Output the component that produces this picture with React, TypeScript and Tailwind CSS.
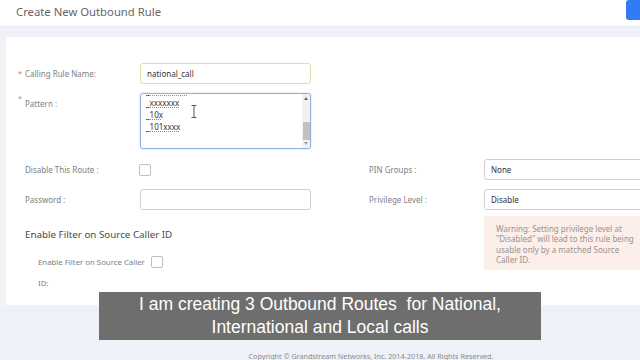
import React from 'react';

const font = { fontFamily: '"Noto Sans", "Open Sans", sans-serif' };

const Label: React.FC<{ text: string; required?: boolean; className?: string }> = ({ text, required, className }) => (
  <div className={`relative pl-[19px] text-[8px] text-[#808080] ${className || ''}`}>
    {required && <span className="absolute left-[12px] top-[1px] text-[7px] text-[#e26a6a]">*</span>}
    {text}
  </div>
);

const Input: React.FC<{ value?: string; className?: string }> = ({ value, className }) => (
  <div
    className={`flex h-[21px] items-center rounded-[3px] border border-[#cfcfcf] bg-white px-[6px] text-[8px] text-[#333] ${className || ''}`}
  >
    {value}
  </div>
);

const patterns = ['_xxxxxxxxx', '_xxxxxxx', '_10x', '_101xxxx'];

export default function App() {
  return (
    <div className="relative h-[360px] w-[640px] overflow-hidden bg-[#eef2f8]" style={font}>
      {/* Header */}
      <div className="flex h-[26px] items-start justify-between bg-white">
        <div className="pl-[16px] pt-[4px] text-[11.3px] text-[#666]">Create New Outbound Rule</div>
        <div className="h-[20px] w-[14px] rounded-l-[3px] bg-[#2f7cf6]" />
      </div>
      <div className="h-[11px] border-t border-[#e6e9ee] bg-[#eef1f5]" />

      <div className="flex h-[268px]">
        <div className="w-[6px] shrink-0 bg-[#f1f3f6]" />
        <div className="flex-1 bg-white pt-[26px]">
          {/* Calling Rule Name */}
          <div className="flex items-center">
            <Label text="Calling Rule Name:" required className="w-[134px]" />
            <Input value="national_call" className="w-[171px] border-[#e3dca6] bg-[#fcf4bf]" />
          </div>

          {/* Pattern */}
          <div className="mt-[9px] flex items-start">
            <Label text="Pattern :" required className="w-[134px] pt-[5px]" />
            <div className="relative flex h-[56px] w-[171px] overflow-hidden rounded-[3px] border border-[#8fb1dc] bg-white shadow-[0_0_2px_#b9d0ee]">
              <div className="mt-[-9px] flex-1 pl-[5px] text-[8px] leading-[12px] text-[#333]">
                {patterns.map((p) => (
                  <div key={p} className="underline decoration-[#e06a6a] decoration-dotted underline-offset-1">
                    {p}
                  </div>
                ))}
              </div>
              <div className="flex w-[8px] flex-col items-center bg-[#f1f1f1]">
                <div className="mt-[3px] h-0 w-0 border-x-[2px] border-b-[3px] border-x-transparent border-b-[#666]" />
                <div className="mt-[22px] h-[18px] w-[7px] bg-[#c1c1c1]" />
                <div className="mt-auto mb-[3px] h-0 w-0 border-x-[2px] border-t-[3px] border-x-transparent border-t-[#999]" />
              </div>
              {/* text cursor */}
              <svg className="absolute left-[50px] top-[11px]" width="6" height="13" viewBox="0 0 6 13">
                <path d="M0.5 0.5h5M3 0.5v12M0.5 12.5h5" stroke="#555" strokeWidth="1" fill="none" />
              </svg>
            </div>
          </div>

          {/* Disable This Route / PIN Groups */}
          <div className="mt-[10px] flex items-center">
            <Label text="Disable This Route :" className="w-[133px]" />
            <div className="h-[12px] w-[12px] rounded-[2px] border border-[#bdbdbd] bg-white" />
            <div className="w-[218px]" />
            <div className="w-[115px] text-[8px] text-[#808080]">PIN Groups :</div>
            <Input value="None" className="w-[172px] shrink-0" />
          </div>

          {/* Password / Privilege Level */}
          <div className="mt-[9px] flex items-center">
            <Label text="Password :" className="w-[134px]" />
            <Input className="w-[171px]" />
            <div className="w-[58px]" />
            <div className="w-[115px] text-[8px] text-[#808080]">Privilege Level :</div>
            <Input value="Disable" className="w-[172px] shrink-0" />
          </div>

          <div className="flex">
            <div className="w-[363px] pt-[18px]">
              <div className="pl-[19px] text-[9.8px] leading-[14px] text-[#4a4a4a]">
                Enable Filter on Source Caller ID
              </div>
              <div className="mt-[10px] flex items-start pl-[32px]">
                <div className="w-[113px] text-[7.8px] leading-[21px] text-[#808080]">
                  <div>Enable Filter on Source Caller</div>
                  <div>ID:</div>
                </div>
                <div className="mt-[4px] h-[12px] w-[12px] rounded-[2px] border border-[#bdbdbd] bg-white" />
              </div>
            </div>
            <div className="w-[115px]" />
            <div className="mt-[6px] h-[54px] w-[172px] shrink-0 whitespace-nowrap rounded-[3px] bg-[#fcefea] pl-[12px] pt-[8px] text-[8px] leading-[10.3px] text-[#9a9290]">
              Warning: Setting privilege level at
              <br />
              "Disabled" will lead to this rule being
              <br />
              usable only by a matched Source
              <br />
              Caller ID.
            </div>
          </div>
        </div>
      </div>

      {/* Footer */}
      <div className="pl-[102px] pt-[46px] text-center text-[7.2px] text-[#8a8a8a]">
        Copyright © Grandstream Networks, Inc. 2014-2018. All Rights Reserved.
      </div>

      {/* Video caption */}
      <div
        className="absolute left-[99px] top-[292px] flex h-[48px] w-[442px] items-center justify-center bg-[#6e6e6e] text-center text-[17.5px] leading-[23px] text-white"
        style={{ fontFamily: '"Liberation Sans", Arial, sans-serif' }}
      >
        <div>
          I am creating 3 Outbound Routes&nbsp; for National,
          <br />
          International and Local calls
        </div>
      </div>
    </div>
  );
}
